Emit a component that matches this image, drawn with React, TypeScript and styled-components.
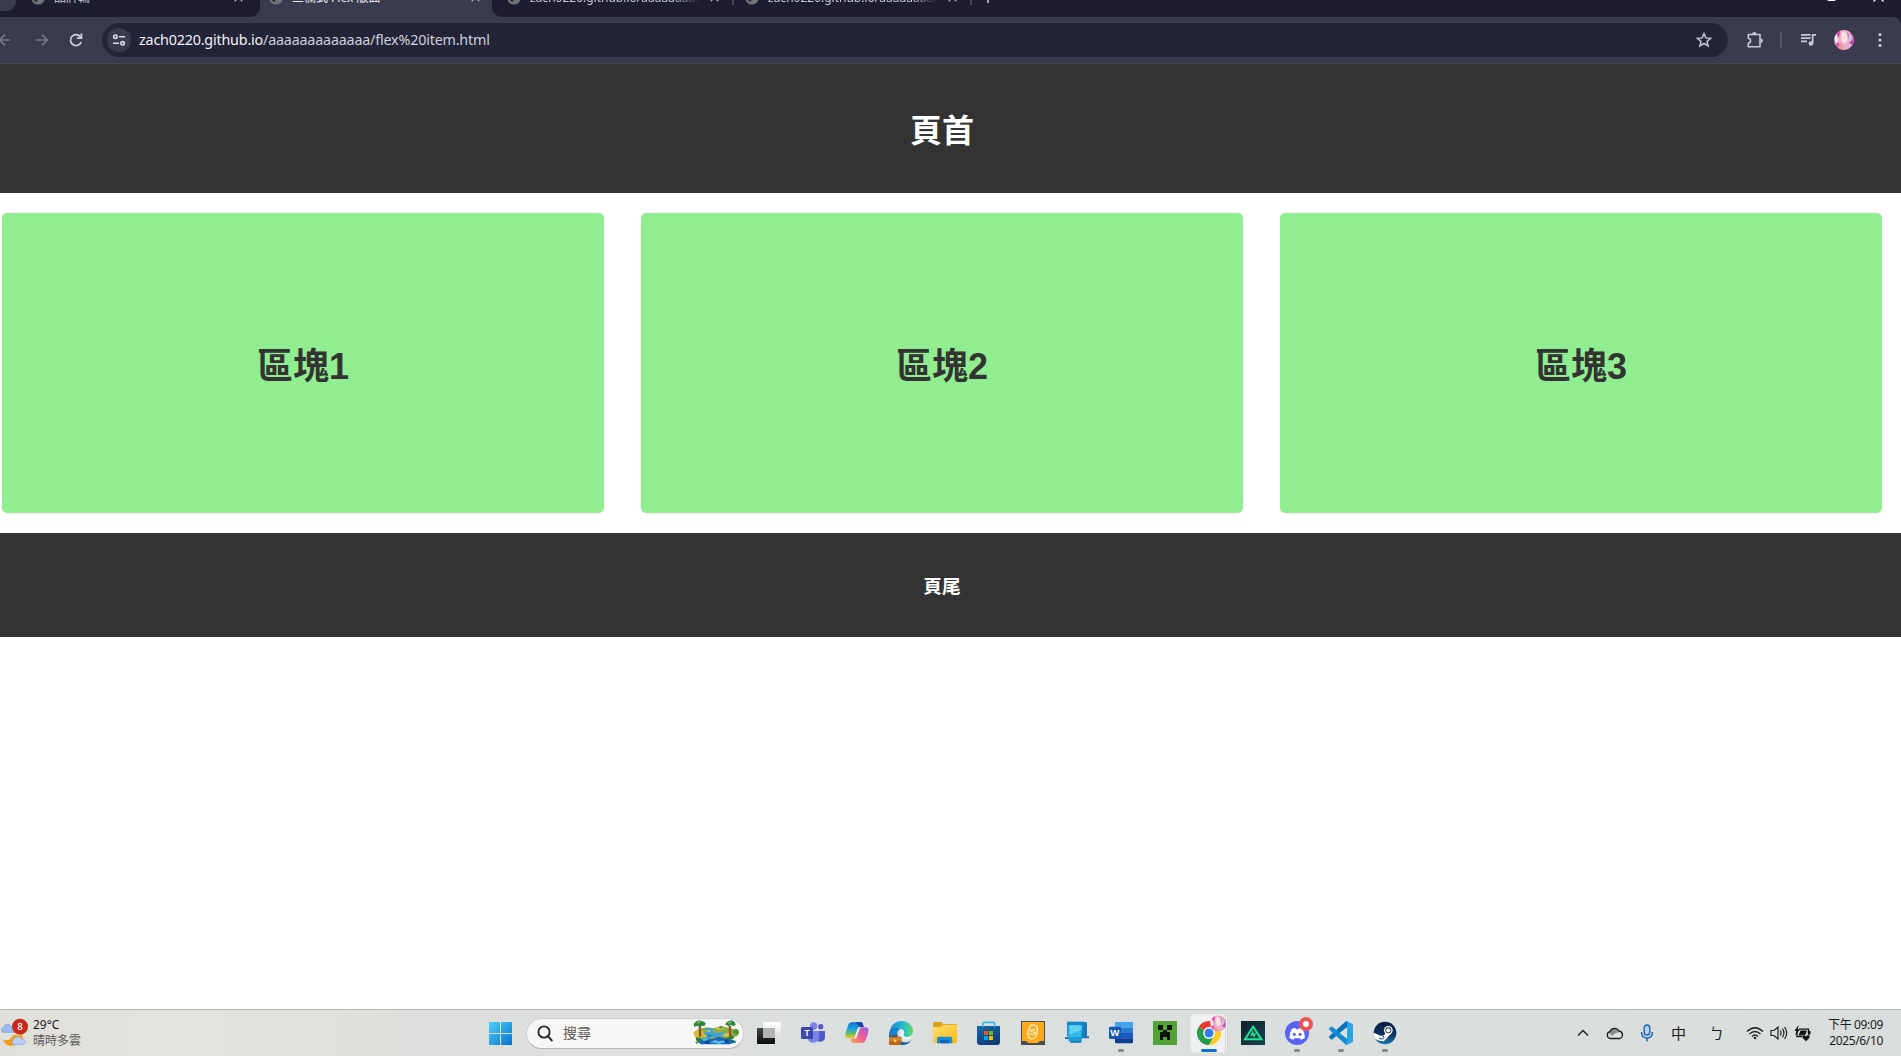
import React from "react";
import styled, { createGlobalStyle } from "styled-components";

const UI = `"Noto Sans", "Open Sans", "Noto Sans CJK TC", sans-serif`;
const PAGE = `"Liberation Sans", "Noto Sans CJK TC", sans-serif`;

const GlobalStyle = createGlobalStyle`
  * { box-sizing: border-box; }
  html, body { margin: 0; padding: 0; background: #fff; overflow: hidden; }
  h1, h3 { margin: 0; }
  svg { display: block; flex: none; }
`;

const Screen = styled.div`
  display: flex;
  flex-direction: column;
  width: 1901px;
  height: 1056px;
  overflow: hidden;
  background: #1d1d2f;
`;

/* ---------- browser chrome ---------- */

const TabStrip = styled.div`
  display: flex;
  align-items: flex-end;
  height: 17px;
  overflow: hidden;
  background: #3b3b4f;
  font-family: ${UI};
`;

const TabGroup = styled.div<{ $w: number; $radius: string }>`
  display: flex;
  align-items: center;
  width: ${(p) => p.$w}px;
  height: 38px;
  background: #1d1d2f;
  border-radius: ${(p) => p.$radius};
  overflow: hidden;
`;

const SearchTabs = styled.div`
  width: 16px;
  height: 27px;
  margin-bottom: 1px;
  background: #3b3b4f;
  border-radius: 0 0 9px 0;
`;

const Tab = styled.div<{ $w: number; $pad: number; $active?: boolean }>`
  display: flex;
  align-items: center;
  width: ${(p) => p.$w}px;
  height: 38px;
  padding-left: ${(p) => p.$pad}px;
  color: ${(p) => (p.$active ? "#e8e8f0" : "#c5c5dc")};
`;

const TabTitle = styled.span<{ $w: number; $fade?: boolean }>`
  width: ${(p) => p.$w}px;
  margin-left: 9px;
  overflow: hidden;
  white-space: nowrap;
  font-size: 12px;
  line-height: 18px;
  mask-image: ${(p) => (p.$fade ? "linear-gradient(90deg, #000 80%, transparent 94%)" : "none")};
`;

const TabDivider = styled.div`
  width: 2px;
  height: 14px;
  background: #44445a;
`;

const WindowButtons = styled.div`
  display: flex;
  align-items: center;
  gap: 37px;
  margin-left: auto;
  padding: 0 17px 3px 0;
`;

const Toolbar = styled.div`
  display: flex;
  align-items: center;
  height: 47px;
  padding-bottom: 1px;
  border-bottom: 1px solid #47474d;
  border-top-right-radius: 8px;
  background: #3b3b4f;
  flex: none;
`;

const NavButtons = styled.div`
  display: flex;
  align-items: center;
  justify-content: space-between;
  width: 89px;
  margin-left: -5px;
  margin-right: 18px;
`;

const Omnibox = styled.div`
  display: flex;
  align-items: center;
  width: 1626px;
  height: 34px;
  padding: 0 15px 0 5px;
  border-radius: 17px;
  background: #242438;
  color: #cfcfdc;
  font-family: ${UI};
  font-size: 14.3px;
  line-height: 20px;
`;

const SiteInfo = styled.div`
  display: flex;
  align-items: center;
  justify-content: center;
  width: 24px;
  height: 24px;
  margin-right: 8px;
  border-radius: 50%;
  background: #3b3b4f;
`;

const Url = styled.div`
  flex: 1;
  white-space: nowrap;
  letter-spacing: -0.18px;
`;

const Host = styled.span`
  color: #f2f2f8;
`;

const ToolbarActions = styled.div`
  display: flex;
  align-items: center;
  margin-left: 18px;
`;

const Separator = styled.div`
  width: 2px;
  height: 16px;
  margin: 0 18px 0 16px;
  background: #56566b;
`;

const AvatarSlot = styled.div`
  margin: 0 24px 0 17px;
`;

/* ---------- web page ---------- */

const Page = styled.main`
  flex: 1;
  min-height: 0;
  background: #fff;
  font-family: ${PAGE};
`;

const Band = styled.div<{ $h: number; $size: number; $drop: number }>`
  display: flex;
  align-items: center;
  justify-content: center;
  height: ${(p) => p.$h}px;
  padding: ${(p) => p.$drop}px 17px 0 0;
  background: #333;
  color: #fff;
  font-size: ${(p) => p.$size}px;

  h1, h3 { font-size: inherit; line-height: 1.4; }
`;

const Columns = styled.section`
  display: flex;
  gap: 37px;
  padding: 20px 0 20px 2px;
`;

const Block = styled.div`
  display: flex;
  align-items: center;
  justify-content: center;
  flex: none;
  width: 602px;
  height: 300px;
  padding-top: 8px;
  border-radius: 5px;
  background: #90ee90;
  color: #333;
  font-size: 36px;
  font-weight: bold;
  line-height: 50px;
`;

/* ---------- taskbar ---------- */

const Taskbar = styled.footer`
  display: flex;
  align-items: stretch;
  height: 47px;
  border-top: 1px solid #b4b4b2;
  background: linear-gradient(90deg, #e0e0db 0, #e4e2dc 180px, #dddfdc 420px, #dbdfde 900px, #d9dedd 100%);
  font-family: ${UI};
  color: #1b1b1b;
`;

const Weather = styled.div`
  display: flex;
  align-items: center;
  width: 478px;
`;

const WeatherText = styled.div`
  display: flex;
  flex-direction: column;
  margin-left: 4px;
  padding-bottom: 1px;
  font-size: 12px;
  line-height: 16px;
`;

const Muted = styled.span`
  color: #5b5b59;
`;

const StartSlot = styled.div`
  display: flex;
  align-items: center;
  width: 48px;
  padding-left: 11px;
`;

const SearchBox = styled.div`
  display: flex;
  align-items: center;
  align-self: center;
  width: 218px;
  height: 31px;
  margin-right: 3px;
  padding: 0 3px 0 10px;
  border: 1px solid #cdd0ce;
  border-bottom-color: #b2b5b3;
  border-radius: 16px;
  background: #f6f6f5;
  color: #5c5c5a;
  font-size: 14px;
  line-height: 20px;
`;

const SearchLabel = styled.span`
  flex: 1;
  margin-left: 10px;
  padding-bottom: 1px;
`;

const AppSlot = styled.div<{ $running?: boolean; $active?: boolean }>`
  position: relative;
  display: flex;
  align-items: center;
  justify-content: center;
  width: 44px;

  &::after {
    content: "";
    display: ${(p) => (p.$running || p.$active ? "block" : "none")};
    position: absolute;
    left: 50%;
    bottom: 4px;
    width: ${(p) => (p.$active ? 16 : 6)}px;
    height: 3px;
    transform: translateX(-50%);
    border-radius: 2px;
    background: ${(p) => (p.$active ? "#0a72cf" : "#858786")};
  }
`;

const ActiveTile = styled.div`
  position: absolute;
  left: 3px;
  top: 4px;
  width: 38px;
  height: 39px;
  border: 1px solid #e6e8e7;
  border-right: 3px double #d3d6d5;
  border-radius: 5px;
  background: #eff0ef;
`;

const IconLayer = styled.div`
  position: relative;
`;

const Tray = styled.div`
  display: flex;
  align-items: center;
  margin-left: auto;
  padding-right: 18px;
`;

const TraySlot = styled.div<{ $w: number; $right?: number }>`
  display: flex;
  align-items: center;
  justify-content: center;
  width: ${(p) => p.$w}px;
  padding-right: ${(p) => p.$right ?? 0}px;
  font-size: 15px;
  line-height: 20px;
`;

const Clock = styled.div`
  display: flex;
  flex-direction: column;
  align-items: flex-end;
  width: 68px;
  padding-bottom: 1px;
  font-size: 12px;
  line-height: 16px;
  letter-spacing: -0.35px;
  white-space: nowrap;
`;

/* ---------- drawings ---------- */

const Globe = () => (
  <svg width="14" height="14" viewBox="0 0 14 14">
    <circle cx="7" cy="7" r="6.6" fill="#72747c" />
    <path d="M2 4c2 0 3 1 5 1s2 2 1 3-2 1-2 3c-2 0-5-3-4-7z" fill="#26263a" />
    <path d="M9 2c1 1 3 2 3 4-2 0-3-1-3-4z" fill="#26263a" />
  </svg>
);

const Cross = ({ color = "#a9a9bd" }: { color?: string }) => (
  <svg width="9" height="11" viewBox="0 0 9 11" stroke={color} strokeWidth="1.3">
    <path d="M.7.7l7.6 7.6M8.3.7L.7 8.3" />
  </svg>
);

const Arrow = ({ back }: { back?: boolean }) => (
  <svg width="20" height="20" viewBox="0 0 20 20" fill="none" stroke="#77778c" strokeWidth="1.7">
    <path d={back ? "M15 10H5M10 4.7L4.7 10l5.3 5.3" : "M4 10h11M10 4.7l5.3 5.3-5.3 5.3"} />
  </svg>
);

const Reload = () => (
  <svg width="16" height="16" viewBox="0 0 16 16" fill="none" stroke="#c9c9dd" strokeWidth="1.8">
    <path d="M13.2 10A5.5 5.5 0 1 1 12.3 4.6L13.4 6" />
    <path d="M13.4 1.6v4.6H8.8" />
  </svg>
);

const Tune = () => (
  <svg width="14" height="14" viewBox="0 0 14 14" fill="none" stroke="#dcdce6" strokeWidth="1.6">
    <circle cx="3.4" cy="3.7" r="1.7" />
    <path d="M7 3.7h6M1 10.3h6" />
    <circle cx="10.6" cy="10.3" r="1.7" />
  </svg>
);

const Star = () => (
  <svg width="18" height="18" viewBox="0 0 18 18" fill="none" stroke="#c6c6ce" strokeWidth="1.5">
    <path d="M9 2.6l1.9 4.3 4.7.4-3.6 3.1 1.1 4.6L9 12.5 4.9 15 6 10.4 2.4 7.3l4.7-.4z" />
  </svg>
);

const Puzzle = () => (
  <svg width="18" height="18" viewBox="0 0 18 18">
    <path
      d="M2.3 3.5H14V15.7H2.3V12.2C5.3 11.7 5.3 7.8 2.3 7.3Z"
      fill="none"
      stroke="#c9c9dd"
      strokeWidth="1.6"
      strokeLinejoin="round"
    />
    <path d="M6.2 3a2.100 2.100 0 0 1 4.200 0zM14.600 7.500a2.200 2.200 0 0 1 0 4.400z" fill="#c9c9dd" />
  </svg>
);

const Queue = () => (
  <svg width="17" height="14" viewBox="0 0 17 14" fill="none" stroke="#c9c9dd" strokeWidth="1.7">
    <path d="M1 1.900h9.500M1 5.100h9.500M1 8.300h6M12.600 10.500V1.900H16" />
    <circle cx="10.900" cy="10.500" r="2.300" fill="#c9c9dd" stroke="none" />
  </svg>
);

const Portrait = ({ size }: { size: number }) => (
  <svg width={size} height={size} viewBox="0 0 20 20">
    <clipPath id={`face${size}`}><circle cx="10" cy="10" r="10" /></clipPath>
    <g clipPath={`url(#face${size})`}>
      <rect width="20" height="20" fill="#e37cc0" />
      <path d="M5 0h11l1 12-2 8H5L3 9z" fill="#f0a9c8" />
      <path d="M8 5c3-3 5-2 6 1l-1 6-3 2-3-4z" fill="#f8dfda" />
      <path d="M4 13l4 1 3 6H4z" fill="#e69a9f" />
      <path d="M15 3l3 4-1 9-2 2v-8z" fill="#bccbf0" />
      <path d="M0 7l3-3 1 8-2 3z" fill="#fbe9f6" />
      <path d="M3 4l3-3-1 7zM15 13l4-4v6zM2 14l2-2 1 5z" fill="#d23a9f" />
      <path d="M9 1l3 3-5 3z" fill="#fde9f1" />
      <path d="M13 2l2 3-1 4z" fill="#c76d9d" />
    </g>
  </svg>
);

const Dots = () => (
  <svg width="4" height="16" viewBox="0 0 4 16" fill="#c9c9dd">
    <circle cx="2" cy="2.500" r="1.600" /><circle cx="2" cy="8" r="1.600" /><circle cx="2" cy="13.500" r="1.600" />
  </svg>
);

const WeatherIcon = () => (
  <svg width="29" height="30" viewBox="0 0 87 90">
    <path d="M45 50h24v18H40z" fill="#f7a928" />
    <path d="M9 65c14 5 26-2 31-15L62 60 44 82C28 86 14 80 9 65z" fill="#f49a17" />
    <path d="M9 43a8 8 0 0 1 1-15 13 13 0 0 1 24-2 9 9 0 0 1 8 17z" fill="#9fbcf0" stroke="#6f98df" strokeWidth="2" />
    <path d="M40 79a8 8 0 0 1 1-14 12 12 0 0 1 22-2 8 8 0 0 1 7 16z" fill="#b9d0f7" stroke="#7fa5e6" strokeWidth="2" />
    <circle cx="60" cy="26" r="24" fill="#c42b1c" />
    <text x="60" y="36" textAnchor="middle" fill="#fff" fontSize="29" fontFamily="Noto Sans" fontWeight="500">8</text>
  </svg>
);

const Windows = () => (
  <svg width="23" height="23" viewBox="0 0 23 23">
    <defs>
      <linearGradient id="win" x1="0" y1="0" x2="23" y2="23" gradientUnits="userSpaceOnUse">
        <stop offset="0" stopColor="#4fd0fb" /><stop offset="1" stopColor="#0670cf" />
      </linearGradient>
    </defs>
    <path d="M0 0h11v11H0zM12 0h11v11H12zM0 12h11v11H0zM12 12h11v11H12z" fill="url(#win)" />
  </svg>
);

const Magnifier = () => (
  <svg width="16" height="17" viewBox="0 0 16 17" fill="none" stroke="#2b2b2b" strokeWidth="1.9">
    <circle cx="7" cy="7" r="5.600" /><path d="M11 11.200l3.800 4.300" strokeLinecap="round" />
  </svg>
);

const Landscape = () => (
  <svg width="47" height="26" viewBox="0 0 141 78">
    <path d="M1 38l14-10 26-6 20 3 24-7 24 6 20 6 10 8-6 10-20 6-24 8-50 6-26-14z" fill="#93ad3c" />
    <path d="M1 38l13-8 16 4 4 14-16 8-12-4z" fill="#dcb93f" />
    <path d="M34 26c18-5 34 1 26 7s18 8 36 1l-6 8 22-4-6 9-20 3c-22-2-24 4-40 4l-18-6c6-6 10-5 4-9l12-4z" fill="#3f9fe0" />
    <path d="M40 30l14 3-8 4zM66 25l18-5 10 5-14 5zM84 46l22-8 12 4-12 9z" fill="#e0c950" />
    <path d="M22 46l12-4 8 6-8 5z" fill="#c7bd40" />
    <path d="M12 58l28-4 14 4 22-8 26 6 20 4 2 8-14 5-88 0z" fill="#1566b9" />
    <path d="M24 56l18-2 4 5-14 4zM50 67l18-8 6 5 20-3 8 5-24 6z" fill="#55b7ea" />
    <path d="M34 66l18-3-8 10zM92 60l18 2-12 7z" fill="#0a428f" />
    <path d="M8 52l14 2 2 10-8 6-6-8zM98 54l20-8 6 8-14 7zM44 44l12 2-8 5zM118 68l8-8 3 10zM6 66l6 0 2 8z" fill="#2c7a38" />
    <path d="M17 18h7l1 30-7 6zM107 18h7l1 30-7 2z" fill="#8b5426" />
    <path d="M2 12l8-8 9-3 10 3 10 6-4 7-9 1-5 4-7-5-10 4z" fill="#2f8540" />
    <path d="M96 12l9-8 12-3 9 6 2 8-8 3-7-3-6 4-6-3z" fill="#30883f" />
    <path d="M14 4l10-1-3 6-9 3zM106 6l10-2-3 6-8 2z" fill="#74b554" />
    <path d="M120 30l9-4 8 5 1 10-8 3-9-4zM76 22l9-4 5 5-8 4z" fill="#4c9641" />
  </svg>
);

const Art = ({ children }: { children: React.ReactNode }) => (
  <svg width="24" height="24" viewBox="0 0 72 72" overflow="visible">{children}</svg>
);

const TaskView = () => (
  <Art>
    <defs>
      <linearGradient id="tvd" x2="0" y2="1"><stop stopColor="#454545" /><stop offset="1" stopColor="#0c0c0c" /></linearGradient>
      <linearGradient id="tvl" x2="0" y2="1"><stop stopColor="#fff" /><stop offset="1" stopColor="#dedede" /></linearGradient>
    </defs>
    <rect y="21" width="54" height="48" rx="3" fill="url(#tvd)" />
    <rect x="18" y="3" width="54" height="48" rx="3" fill="url(#tvl)" />
    <path d="M18 21h36v30H18z" fill="#b3b3b3" />
  </Art>
);

const Teams = () => (
  <Art>
    <circle cx="59" cy="17" r="8" fill="#5059c9" />
    <path d="M48 30h24v17a14 14 0 0 1-24 11z" fill="#5059c9" />
    <circle cx="38" cy="15" r="11" fill="#7b83eb" />
    <path d="M20 30h35v18a18 18 0 0 1-35 5z" fill="#7b83eb" />
    <rect y="18" width="36" height="36" rx="4" fill="#4048ae" />
    <text x="18" y="45" textAnchor="middle" fontFamily="Liberation Sans" fontWeight="bold" fontSize="25" fill="#fff">T</text>
  </Art>
);

const Copilot = () => (
  <Art>
    <defs>
      <linearGradient id="cpa" x1="0" y1="0" x2="0" y2="1">
        <stop stopColor="#1768d5" /><stop offset=".4" stopColor="#12a5df" /><stop offset=".7" stopColor="#68bd64" /><stop offset="1" stopColor="#f2c52c" />
      </linearGradient>
      <linearGradient id="cpb" x1="1" y1="0" x2="0" y2="1">
        <stop stopColor="#9a5ce8" /><stop offset=".5" stopColor="#ed5e95" /><stop offset="1" stopColor="#ffa74e" />
      </linearGradient>
    </defs>
    <path d="M20 4h27c6 0 7 5 9 14h-9c-6 0-8 4-10 10l-6 17c-2 6-5 7-11 7H10C-2 52 0 42 4 29l5-15C12 6 15 4 20 4z" fill="url(#cpa)" />
    <path d="M52 66H26c-7 0-8-5-10-13h9c6 0 8-4 10-10l6-16c2-6 5-8 11-8h9c12 0 11 10 7 22l-5 14c-3 8-6 11-11 11z" fill="url(#cpb)" />
    <path d="M28 4h19c6 0 7 5 9 14H45c-6-2-5-12-17-14z" fill="#1945a8" />
    <path d="M37 25c2-6 5-7 9-7l-9 26c-2 6-4 8-10 9z" fill="#e8edef" />
  </Art>
);

const Edge = () => (
  <Art>
    <defs>
      <linearGradient id="eda"><stop stopColor="#198bd2" /><stop offset=".6" stopColor="#27bbcf" /><stop offset="1" stopColor="#63de5b" /></linearGradient>
    </defs>
    <path d="M2 34C4 12 20 0 38 0c22 0 34 16 34 29 0 12-8 18-18 18-8 0-14-3-9-9 3-6-1-15-12-15S8 28 2 46z" fill="url(#eda)" />
    <path d="M0 46c0-18 14-27 31-25-14 7-12 36 10 42 12 4 21-1 27-6-8 12-20 16-31 15C18 72 0 64 0 46z" fill="#0f5daa" />
    <path d="M2 44C6 24 23 19 34 24c-14 8-7 22-7 22z" fill="#1389d1" />
    <path d="M36 30c4-6 12 0 9 8s2 10 10 10l11-3c2 4 0 8-4 10-14 6-34-8-26-25z" fill="#e6f1f5" />
    <rect x="0" y="47" width="37" height="25" rx="3" fill="#b86519" />
    <path d="M0 50h37v9H0z" fill="#dc8a2b" /><path d="M12 47v-4h13v4" fill="none" stroke="#85450f" strokeWidth="3" />
    <path d="M15 56h7v8h-7z" fill="#f4cb60" />
  </Art>
);

const Folder = () => (
  <Art>
    <defs><linearGradient id="fld" x2=".7" y2="1"><stop stopColor="#ffdf76" /><stop offset="1" stopColor="#fbbd15" /></linearGradient></defs>
    <path d="M0 7q0-4 4-4h21l6 6h37q4 0 4 4v10H0z" fill="#dda21c" />
    <path d="M0 18h24l6-7h38q4 0 4 4v48q0 4-4 4H4q-4 0-4-4z" fill="url(#fld)" />
    <path d="M12 67V53q0-6 6-6h34q6 0 6 6v14z" fill="#168bd8" />
    <path d="M22 67v-7q0-3 3-3h20q3 0 3 3v7z" fill="#0965b6" />
  </Art>
);

const Store = () => (
  <Art>
    <defs><linearGradient id="sto" x2=".5" y2="1"><stop stopColor="#126bab" /><stop offset="1" stopColor="#123c78" /></linearGradient></defs>
    <path d="M18 22V9q0-5 5-5h25q5 0 5 5v13" fill="none" stroke="#36b8f1" strokeWidth="5" />
    <path d="M0 15h69v48q0 9-8 9H9q-9 0-9-9z" fill="url(#sto)" />
    <path d="M16 15h5v4h-5zM50 15h5v4h-5z" fill="#36b8f1" />
    <path d="M21 30h12v12H21z" fill="#f25022" /><path d="M36 30h12v12H36z" fill="#7fba00" />
    <path d="M21 45h12v12H21z" fill="#00a4ef" /><path d="M36 45h12v12H36z" fill="#ffb900" />
  </Art>
);

const Scratch = () => (
  <Art>
    <path d="M0 0h72v72H0z" fill="#4c4d4f" />
    <path d="M3 3h66v57H57l-7 6H22l-7-6H3z" fill="#fca91d" />
    <path d="M28 14c12-6 24 2 21 14l-2 12c-3 13-16 17-23 10-4-6-3-18 0-26z" fill="none" stroke="#fff0cf" strokeWidth="4" />
    <text x="36" y="43" textAnchor="middle" fontFamily="Liberation Sans" fontWeight="bold" fontSize="29" fill="#fff3d8">S</text>
  </Art>
);

const Computer = () => (
  <Art>
    <g transform="scale(.89 1)">
      <path d="M22 4h52v42h7v6H30z" fill="#1876b8" />
      <path d="M7 2h58v45H7z" fill="#1385ca" />
      <path d="M11 13h45v36H11z" fill="#31b8e9" /><path d="M15 13h41v14L15 40z" fill="#61d2f4" />
      <path d="M18 59h37v6H18zM0 49h17v5H0z" fill="#116aab" /><path d="M12 48h44v13H12z" fill="#1b9bd6" />
    </g>
  </Art>
);

const Word = () => (
  <Art>
    <path d="M18 3h54v17H18z" fill="#41a5ee" /><path d="M18 20h54v16H18z" fill="#2b7cd3" />
    <path d="M18 36h54v16H18z" fill="#185abd" /><path d="M18 52h54v12q0 3-3 3H21q-3 0-3-3z" fill="#103f91" />
    <rect y="17" width="36" height="37" rx="3" fill="#1857b4" />
    <text x="17.500" y="45" textAnchor="middle" fontFamily="Liberation Sans" fontWeight="bold" fontSize="29" fill="#fff">W</text>
  </Art>
);

const Creeper = () => (
  <Art>
    <path d="M0 0h72v72H0z" fill="#52a535" />
    <path d="M15 12h15v15h12V12h15v15H42v6h9v24h-9v-9H30v9h-9V33h9v-6H15z" fill="#0c1508" />
  </Art>
);

const Chrome = () => (
  <svg width="24" height="24" viewBox="0 0 24 24" overflow="visible">
    <path d="M12 12L1.600 6A12 12 0 0 1 22.400 6z" fill="#e33b2e" />
    <path d="M12 6.500h10.700A12 12 0 0 1 12 24l5-9z" fill="#fdce20" />
    <path d="M6.800 15L1.600 6 12 12l5 3-5 9A12 12 0 0 1 1.600 6z" fill="#259b4c" />
    <circle cx="12" cy="12" r="5.900" fill="#fff" /><circle cx="12" cy="12" r="4.500" fill="#337be8" />
    <g transform="translate(13 -5.500)"><Portrait size={16} /></g>
  </svg>
);

const Predator = () => (
  <Art>
    <defs><linearGradient id="prd" x2="1" y2="1"><stop stopColor="#111f29" /><stop offset="1" stopColor="#12444c" /></linearGradient></defs>
    <path d="M0 0h72v72H0z" fill="url(#prd)" />
    <path d="M36 17L12 55h49z" fill="none" stroke="#1fe49a" strokeWidth="6" />
    <path d="M35 26l4 13 7-4-7 17-3-9-9 5z" fill="#1fe49a" />
  </Art>
);

const Discord = () => (
  <Art>
    <circle cx="36" cy="36" r="36" fill="#5865f2" />
    <path d="M20 25q7-4 11-4l2 4h7l2-4q6 1 11 4 7 12 7 25-6 5-13 6l-3-5q-8 2-15 0l-3 5q-8-1-13-6 0-13 7-25z" fill="#fff" />
    <ellipse cx="28" cy="40" rx="4.500" ry="5" fill="#5865f2" /><ellipse cx="45" cy="40" rx="4.500" ry="5" fill="#5865f2" />
    <circle cx="63" cy="9" r="21" fill="#ef5353" /><circle cx="63" cy="9" r="9" fill="#fff" />
  </Art>
);

const VSCode = () => (
  <Art>
    <path d="M52 0l18 8q2 1 2 3v50q0 2-2 3l-18 8-4-4V4z" fill="#29a4ec" />
    <path d="M54 1v18L10 55q-2 1-4 0l-5-5q-2-2 0-4L48 3q3-3 6-2z" fill="#0673b8" />
    <path d="M54 71V53L10 17q-2-1-4 0l-5 5q-2 2 0 4l47 43q3 3 6 2z" fill="#138bd1" />
    <path d="M54 19v34L33 36z" fill="#dce0df" />
  </Art>
);

const Steam = () => (
  <Art>
    <defs>
      <linearGradient id="stm" x2="0" y2="1"><stop stopColor="#101d42" /><stop offset=".5" stopColor="#0d2c5b" /><stop offset="1" stopColor="#177bb0" /></linearGradient>
      <clipPath id="stc"><circle cx="36" cy="36" r="34" /></clipPath>
    </defs>
    <circle cx="36" cy="36" r="34" fill="url(#stm)" />
    <g clipPath="url(#stc)">
      <path d="M0 34l22 10 12-2 9-14 12 8-15 17-8 8-13-2L0 51z" fill="#fff" />
      <circle cx="46" cy="28" r="13" fill="#fff" /><circle cx="46" cy="28" r="9" fill="#0e2850" /><circle cx="46" cy="28" r="6.500" fill="#f3f3f3" />
      <path d="M18 51l7 3q7 1 8-5-1-6-6-5" fill="none" stroke="#0e3a6a" strokeWidth="3" />
    </g>
  </Art>
);

const Chevron = () => (
  <svg width="12" height="8" viewBox="0 0 12 8" fill="none" stroke="#222" strokeWidth="1.5"><path d="M1 6.500l5-5 5 5" /></svg>
);

const Cloud = () => (
  <svg width="18" height="13" viewBox="0 0 18 13">
    <path d="M4.500 11.500A3.500 3.500 0 0 1 4 4.600 5 5 0 0 1 13 4a3.900 3.900 0 0 1 1 7.500z" fill="#dfe1e0" />
    <path d="M2.500 5.500l2-2q4-4 8 0l1 1.500-4.500 1.500L6 9z" fill="#8d8f8e" />
    <path d="M4.500 11.500A3.500 3.500 0 0 1 4 4.600 5 5 0 0 1 13 4a3.900 3.900 0 0 1 1 7.500z" fill="none" stroke="#1d1d1d" strokeWidth="1.3" />
  </svg>
);

const Mic = () => (
  <svg width="14" height="18" viewBox="0 0 14 18" fill="none" stroke="#1d62b4" strokeWidth="1.4">
    <rect x="4.200" y="1" width="5.600" height="10" rx="2.800" fill="#b9d2e9" />
    <path d="M1.500 8c0 4 2 6 5.500 6s5.500-2 5.500-6M7 14v3.500" />
  </svg>
);

const Wifi = () => (
  <svg width="18" height="14" viewBox="0 0 18 14" fill="none" stroke="#222" strokeWidth="1.3">
    <path d="M1 5.500Q9-2 17 5.500M3.500 8Q9 3 14.500 8M6 10.400q3-2.800 6 0" /><circle cx="9" cy="12" r="1.300" fill="#222" stroke="none" />
  </svg>
);

const Volume = () => (
  <svg width="18" height="16" viewBox="0 0 18 16" fill="none" stroke="#222" strokeWidth="1.2">
    <path d="M1 5.500h3L8 2v12l-4-3.500H1zM10.200 5.500q1.800 2.500 0 5M12.400 3.700q3 4.300 0 8.600M14.600 2q4.200 6 0 12" />
  </svg>
);

const Battery = () => (
  <svg width="18" height="17" viewBox="0 0 18 17">
    <path d="M5 4.200h9.500v7.500H3V7" fill="none" stroke="#111" strokeWidth="1.3" />
    <path d="M6.500 5.500h6.500l-2 5H4.500zM15 6h1.500v3.500H15zM4.500 0L.5 6h2L1 10.500 6 4.500H3.800z" fill="#111" />
    <path d="M12 16.500L8.500 13q-1-2.500 1-3 1.500-.3 2.500 1.200 1-1.500 2.500-1.200 2 .5 1 3z" fill="#111" stroke="#dbdfde" strokeWidth=".5" />
  </svg>
);

const apps: { art: React.ReactNode; running?: boolean; active?: boolean }[] = [
  { art: <TaskView /> },
  { art: <Teams /> },
  { art: <Copilot /> },
  { art: <Edge /> },
  { art: <Folder /> },
  { art: <Store /> },
  { art: <Scratch /> },
  { art: <Computer /> },
  { art: <Word />, running: true },
  { art: <Creeper /> },
  { art: <Chrome />, active: true },
  { art: <Predator /> },
  { art: <Discord />, running: true },
  { art: <VSCode />, running: true },
  { art: <Steam />, running: true },
];

export default function App() {
  return (
    <Screen>
      <GlobalStyle />
      <TabStrip>
        <TabGroup $w={260} $radius="0 0 10px 0">
          <SearchTabs />
          <Tab $w={244} $pad={15}>
            <Globe />
            <TabTitle $w={180}>品牌輪</TabTitle>
            <Cross />
          </Tab>
        </TabGroup>
        <Tab $w={232} $pad={9} $active>
          <Globe />
          <TabTitle $w={179}>三欄式 Flex 版面</TabTitle>
          <Cross />
        </Tab>
        <TabGroup $w={1409} $radius="0 0 0 10px">
          <Tab $w={240} $pad={15}>
            <Globe />
            <TabTitle $w={180} $fade>zach0220.github.io/aaaaaaaaa</TabTitle>
            <Cross />
          </Tab>
          <TabDivider />
          <Tab $w={236} $pad={11}>
            <Globe />
            <TabTitle $w={180} $fade>zach0220.github.io/aaaaaaaaa</TabTitle>
            <Cross />
          </Tab>
          <TabDivider />
          <svg width="30" height="14" viewBox="0 0 30 14" stroke="#c9c9dd" strokeWidth="1.6">
            <path d="M10 6h12M16 0v12" />
          </svg>
          <WindowButtons>
            <svg width="9" height="11" viewBox="0 0 9 11" fill="none" stroke="#fff" strokeWidth="1.2">
              <rect x=".6" y="1.600" width="7.800" height="7.800" rx="1.500" />
            </svg>
            <svg width="11" height="11" viewBox="0 0 11 11" stroke="#fff" strokeWidth="1.3">
              <path d="M.5.5l10 10M10.500.5l-10 10" />
            </svg>
          </WindowButtons>
        </TabGroup>
      </TabStrip>

      <Toolbar>
        <NavButtons>
          <Arrow back />
          <Arrow />
          <Reload />
        </NavButtons>
        <Omnibox>
          <SiteInfo><Tune /></SiteInfo>
          <Url><Host>zach0220.github.io</Host>/aaaaaaaaaaaaa/flex%20item.html</Url>
          <Star />
        </Omnibox>
        <ToolbarActions>
          <Puzzle />
          <Separator />
          <Queue />
          <AvatarSlot><Portrait size={20} /></AvatarSlot>
          <Dots />
        </ToolbarActions>
      </Toolbar>

      <Page>
        <Band as="header" $h={129} $size={32} $drop={5}><h1>頁首</h1></Band>
        <Columns>
          <Block>區塊1</Block>
          <Block>區塊2</Block>
          <Block>區塊3</Block>
        </Columns>
        <Band $h={104} $size={18.72} $drop={5}><h3>頁尾</h3></Band>
      </Page>

      <Taskbar>
        <Weather>
          <WeatherIcon />
          <WeatherText>
            <span>29°C</span>
            <Muted>晴時多雲</Muted>
          </WeatherText>
        </Weather>
        <StartSlot><Windows /></StartSlot>
        <SearchBox>
          <Magnifier />
          <SearchLabel>搜尋</SearchLabel>
          <Landscape />
        </SearchBox>
        {apps.map((app, i) => (
          <AppSlot key={i} $running={app.running} $active={app.active}>
            {app.active && <ActiveTile />}
            <IconLayer>{app.art}</IconLayer>
          </AppSlot>
        ))}
        <Tray>
          <TraySlot $w={32}><Chevron /></TraySlot>
          <TraySlot $w={32}><Cloud /></TraySlot>
          <TraySlot $w={32}><Mic /></TraySlot>
          <TraySlot $w={31}>中</TraySlot>
          <TraySlot $w={49} $right={4}>ㄅ</TraySlot>
          <TraySlot $w={24}><Wifi /></TraySlot>
          <TraySlot $w={24}><Volume /></TraySlot>
          <TraySlot $w={24}><Battery /></TraySlot>
          <Clock>
            <span>下午 09:09</span>
            <span>2025/6/10</span>
          </Clock>
        </Tray>
      </Taskbar>
    </Screen>
  );
}
